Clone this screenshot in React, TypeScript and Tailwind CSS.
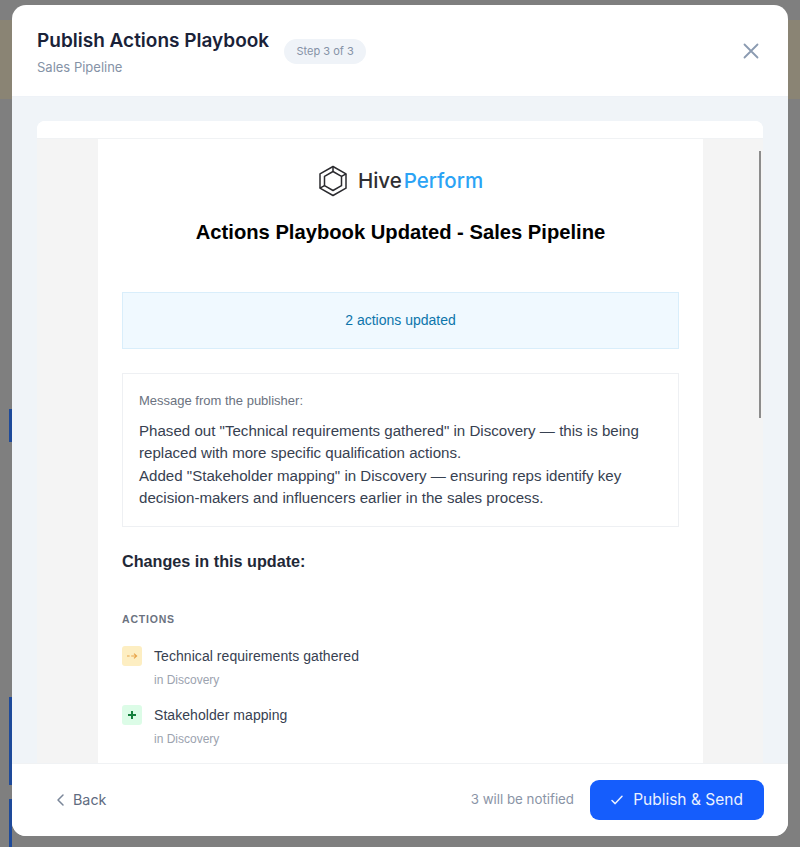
import React from "react";

function HexLogo() {
  return (
    <svg width="30" height="32" viewBox="0 0 30 32" fill="none" stroke="#2b2b2f" strokeWidth="1.5" strokeLinejoin="round">
      <path d="M15 1.5 28 8.8V23.2L15 30.5 2 23.2V8.8Z" />
      <path d="M15 6.5 23.5 11.3V20.7L15 25.5 6.5 20.7V11.3Z" />
      <path d="M15 1.5V6.5M28 8.8 23.5 11.3M2 23.2 6.5 20.7" />
    </svg>
  );
}

function ActionRow({ kind, title }: { kind: "swap" | "add"; title: string }) {
  return (
    <div className="flex gap-[12px]">
      {kind === "swap" ? (
        <div className="w-[20px] h-[20px] rounded-[3px] bg-[#fdeec2] flex items-center justify-center">
          <svg width="12" height="8" viewBox="0 0 12 8" fill="none" stroke="#e8a64c" strokeWidth="1.2">
            <path d="M1 4h2.6M5.2 4h5.2M8 1.6 10.6 4 8 6.4" />
          </svg>
        </div>
      ) : (
        <div className="w-[20px] h-[20px] rounded-[3px] bg-[#dcfce7] flex items-center justify-center">
          <svg width="10" height="10" viewBox="0 0 10 10" fill="none" stroke="#15803d" strokeWidth="2">
            <path d="M5 1v8M1 5h8" />
          </svg>
        </div>
      )}
      <div className="flex flex-col">
        <span className="text-[14px] leading-[20px] tracking-[0.06px] text-[#374151]">{title}</span>
        <span className="mt-[7px] text-[12px] leading-[14px] text-[#9ca3af]">in Discovery</span>
      </div>
    </div>
  );
}

export default function App() {
  return (
    <div className="relative w-[800px] h-[847px] overflow-hidden bg-[#7f7f7f] pt-[5px] px-[12px] font-['Inter',sans-serif]">
      <div className="absolute left-0 top-[20px] w-[12px] h-[79px] bg-[#8a8474]" />
      <div className="absolute right-0 top-[20px] w-[12px] h-[79px] bg-[#8a8474]" />
      <div className="absolute left-[9px] top-[409px] w-[3px] h-[33px] bg-[#1e4a9a]" />
      <div className="absolute left-[9px] top-[697px] w-[3px] h-[88px] bg-[#1e4a9a]" />
      <div className="absolute left-[9px] top-[799px] w-[3px] h-[48px] bg-[#1e4a9a]" />

      <div className="relative w-[776px] h-[831px] rounded-[14px] bg-white overflow-hidden flex flex-col">
        <header className="h-[92px] shrink-0 flex items-start pl-[25px] pr-[28px] pt-[24px] border-b border-[#eef2f7]">
          <div className="flex flex-col">
            <h1 className="text-[19px] leading-[24px] font-semibold text-[#1a2238] whitespace-nowrap">Publish Actions Playbook</h1>
            <span className="mt-[5px] text-[13px] leading-[18px] text-[#8592a6]">Sales Pipeline</span>
          </div>
          <span className="ml-[15px] mt-[10px] h-[25px] w-[82px] text-center rounded-full bg-[#eff3f8] text-[11px] leading-[25px] text-[#8592a6] whitespace-nowrap">Step 3 of 3</span>
          <button className="ml-auto mt-[14px] mr-[1px] text-[#8b9bb1]">
            <svg width="16" height="16" viewBox="0 0 16 16" fill="none" stroke="currentColor" strokeWidth="1.8" strokeLinecap="round">
              <path d="M1.5 1.5 14.5 14.5M14.5 1.5 1.5 14.5" />
            </svg>
          </button>
        </header>

        <div className="flex-1 min-h-0 bg-[#f0f4f8] pt-[24px] px-[25px] overflow-hidden">
          <div className="h-full rounded-t-[8px] bg-white overflow-hidden flex flex-col">
            <div className="h-[18px] shrink-0 bg-white border-b border-[#f0f2f4]" />
            <div className="relative flex-1 min-h-0 bg-[#f4f4f4] overflow-hidden flex justify-start pl-[61px]">
              <div className="w-[605px] h-full bg-white px-[24px] pt-[25px] font-['Liberation_Sans',Arial,sans-serif]">
                <div className="flex items-center justify-center h-[34px]">
                  <HexLogo />
                  <div className="ml-[10px] font-['Inter',sans-serif] text-[20.5px] leading-[34px] font-medium whitespace-nowrap">
                    <span className="text-[#2f2f33]">Hive</span>
                    <span className="text-[#2ba3f5] ml-[2px]">Perform</span>
                  </div>
                </div>
                <h2 className="mt-[22px] text-center text-[20.2px] leading-[24px] font-bold text-black">Actions Playbook Updated - Sales Pipeline</h2>
                <div className="mt-[48px] h-[57px] bg-[#f0f9ff] border border-[#d9eefb] flex items-center justify-center text-[14px] text-[#0c75ab]">2 actions updated</div>
                <div className="mt-[24px] h-[154px] border border-[#eef0f3] px-[16px] pt-[19px]">
                  <p className="text-[13px] leading-[16px] text-[#6b7280]">Message from the publisher:</p>
                  <p className="mt-[11px] text-[15.1px] leading-[22.4px] text-[#374151]">
                    Phased out "Technical requirements gathered" in Discovery — this is being
                    <br />
                    replaced with more specific qualification actions.
                    <br />
                    Added "Stakeholder mapping" in Discovery — ensuring reps identify key
                    <br />
                    decision-makers and influencers earlier in the sales process.
                  </p>
                </div>
                <h3 className="mt-[24px] text-[16.2px] leading-[20px] font-bold text-[#1f2937]">Changes in this update:</h3>
                <div className="mt-[41px] text-[10.5px] leading-[14px] font-bold tracking-[0.8px] text-[#6b7280]">ACTIONS</div>
                <div className="mt-[20px] flex flex-col gap-[18px]">
                  <ActionRow kind="swap" title="Technical requirements gathered" />
                  <ActionRow kind="add" title="Stakeholder mapping" />
                </div>
              </div>
              <div className="absolute right-[2px] top-[12px] w-[2px] h-[267px] bg-[#8c8c8c]" />
            </div>
          </div>
        </div>

        <footer className="h-[73px] shrink-0 bg-white border-t border-[#f0f2f4] flex items-center pl-[44px] pr-[24px] pb-[1px]">
          <button className="flex items-center gap-[8px] text-[14.3px] text-[#606b80]">
            <svg width="9" height="14" viewBox="0 0 9 14" fill="none" stroke="#7a8699" strokeWidth="1.5" strokeLinecap="round" strokeLinejoin="round">
              <path d="M7 2 2 7l5 5" />
            </svg>
            Back
          </button>
          <span className="ml-auto text-[13.3px] text-[#8a94a6]">3 will be notified</span>
          <button className="ml-[16px] w-[174px] h-[40px] rounded-[9px] bg-[#155dfc] flex items-center justify-center gap-[10px] text-[15.5px] font-normal text-[#eaf1ff] whitespace-nowrap">
            <svg width="12" height="10" viewBox="0 0 12 10" fill="none" stroke="#eaf1ff" strokeWidth="1.5" strokeLinecap="round" strokeLinejoin="round">
              <path d="M1 5.5 4.2 8.6 11 1.2" />
            </svg>
            Publish &amp; Send
          </button>
        </footer>
      </div>
    </div>
  );
}
